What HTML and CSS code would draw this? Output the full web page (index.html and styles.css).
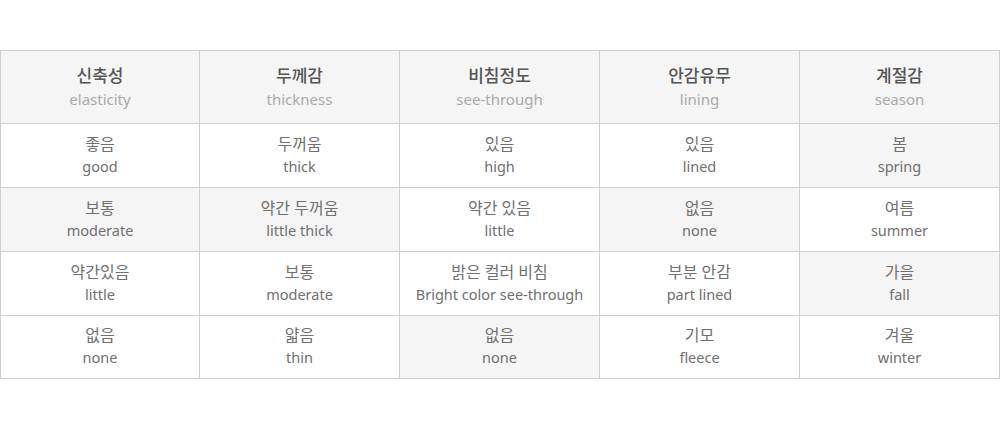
FILE: index.html
```html
<!DOCTYPE html>
<html lang="ko">
<head>
<meta charset="utf-8">
<link rel="stylesheet" href="styles.css">
</head>
<body>
<div class="wrap">
<table class="spec">
  <colgroup>
    <col class="c-first"><col class="c"><col class="c"><col class="c"><col class="c">
  </colgroup>
  <thead>
    <tr>
      <th><span class="ko">신축성</span><span class="en">elasticity</span></th>
      <th><span class="ko">두께감</span><span class="en">thickness</span></th>
      <th><span class="ko">비침정도</span><span class="en">see-through</span></th>
      <th><span class="ko">안감유무</span><span class="en">lining</span></th>
      <th><span class="ko">계절감</span><span class="en">season</span></th>
    </tr>
  </thead>
  <tbody>
    <tr>
      <td><span class="ko">좋음</span><span class="en">good</span></td>
      <td><span class="ko">두꺼움</span><span class="en">thick</span></td>
      <td><span class="ko">있음</span><span class="en">high</span></td>
      <td><span class="ko">있음</span><span class="en">lined</span></td>
      <td class="on"><span class="ko">봄</span><span class="en">spring</span></td>
    </tr>
    <tr>
      <td class="on"><span class="ko">보통</span><span class="en">moderate</span></td>
      <td class="on"><span class="ko">약간 두꺼움</span><span class="en">little thick</span></td>
      <td><span class="ko">약간 있음</span><span class="en">little</span></td>
      <td class="on"><span class="ko">없음</span><span class="en">none</span></td>
      <td><span class="ko">여름</span><span class="en">summer</span></td>
    </tr>
    <tr>
      <td><span class="ko">약간있음</span><span class="en">little</span></td>
      <td><span class="ko">보통</span><span class="en">moderate</span></td>
      <td><span class="ko">밝은 컬러 비침</span><span class="en">Bright color see-through</span></td>
      <td><span class="ko">부분 안감</span><span class="en">part lined</span></td>
      <td class="on"><span class="ko">가을</span><span class="en">fall</span></td>
    </tr>
    <tr class="last">
      <td><span class="ko">없음</span><span class="en">none</span></td>
      <td><span class="ko">얇음</span><span class="en">thin</span></td>
      <td class="on"><span class="ko">없음</span><span class="en">none</span></td>
      <td><span class="ko">기모</span><span class="en">fleece</span></td>
      <td><span class="ko">겨울</span><span class="en">winter</span></td>
    </tr>
  </tbody>
</table>
</div>
</body>
</html>
```
FILE: styles.css
```css
html, body {
  margin: 0;
  padding: 0;
  background: #fff;
}
body {
  font-family: "Noto Sans", "Noto Sans CJK KR", sans-serif;
  color: #666;
}
.wrap {
  padding-top: 50px;
}
.spec {
  width: 1000px;
  border-collapse: separate;
  border-spacing: 0;
  table-layout: fixed;
  border-top: 1px solid #cfcfcf;
  border-left: 1px solid #cfcfcf;
}
.c-first {
  width: 199px;
}
.c {
  width: 200px;
}
.spec th, .spec td {
  border-right: 1px solid #cfcfcf;
  border-bottom: 1px solid #cfcfcf;
  text-align: center;
  vertical-align: middle;
  padding: 0 0 2px;
  box-sizing: border-box;
}
.spec th {
  height: 73px;
  padding: 0;
  background: #f5f5f5;
  font-weight: normal;
}
.spec td {
  height: 64px;
}
.spec tr.last td {
  height: 63px;
}
.spec td.on {
  background: #f5f5f5;
}
.ko, .en {
  display: block;
}
.spec th .ko {
  font-size: 17px;
  line-height: 24px;
  color: #555;
  font-weight: 500;
}
.spec th .en {
  font-size: 15px;
  line-height: 22px;
  color: #aaa;
}
.spec td .ko {
  font-size: 16px;
  line-height: 23px;
  color: #707070;
}
.spec td .en {
  font-size: 14.5px;
  line-height: 21px;
  color: #707070;
}
```
